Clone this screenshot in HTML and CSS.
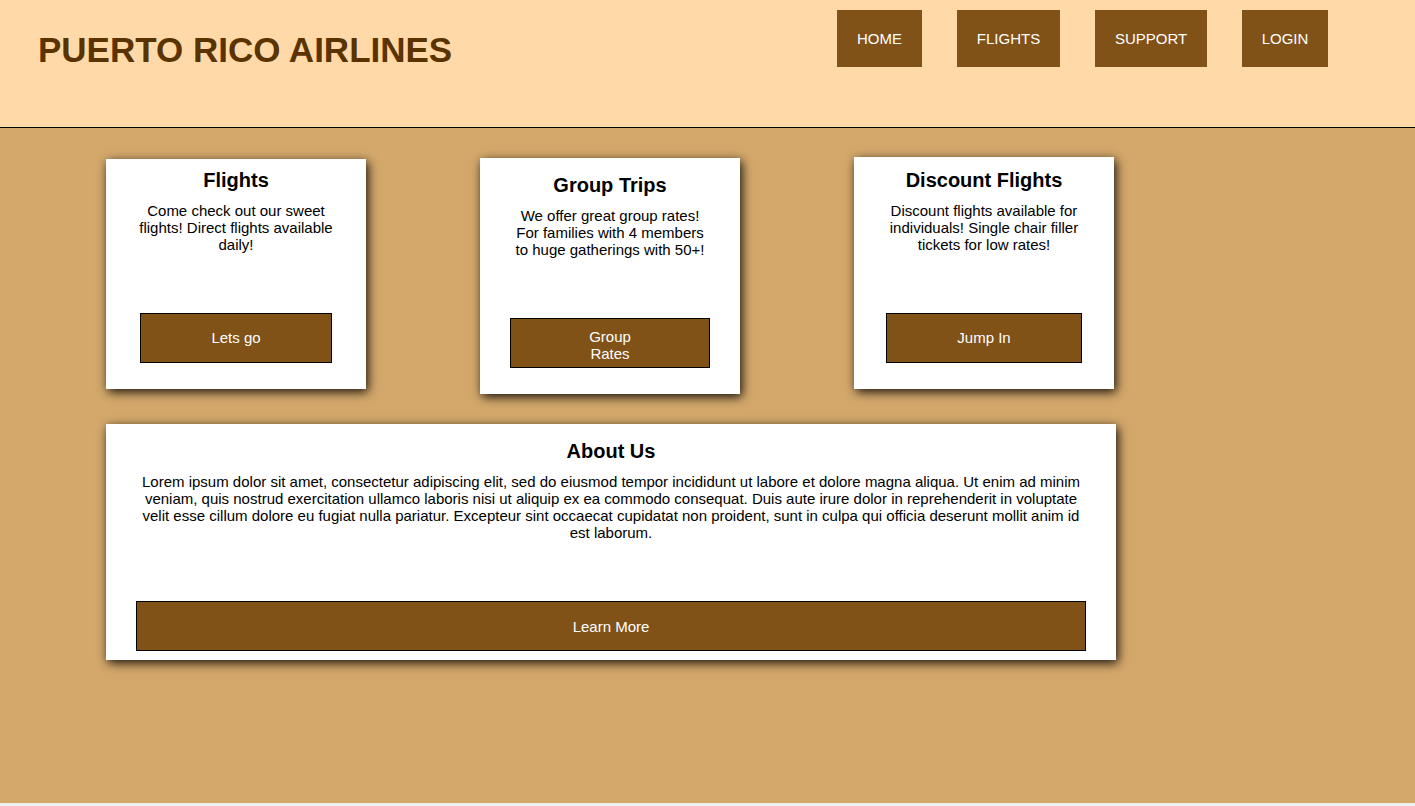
FILE: index.html
```html
<!DOCTYPE html>
<html lang="en">
<head>
<meta charset="utf-8">
<title>Puerto Rico Airlines</title>
<link rel="stylesheet" href="styles.css">
</head>
<body>
<header class="site-header">
  <h1 class="brand">PUERTO RICO AIRLINES</h1>
  <nav class="nav">
    <a class="nav-btn nav-home" href="#">HOME</a>
    <a class="nav-btn nav-flights" href="#">FLIGHTS</a>
    <a class="nav-btn nav-support" href="#">SUPPORT</a>
    <a class="nav-btn nav-login" href="#">LOGIN</a>
  </nav>
</header>
<main class="main">
  <section class="cards">
    <article class="card card-flights">
      <h2 class="card-title">Flights</h2>
      <p class="card-text">Come check out our sweet flights! Direct flights available daily!</p>
      <button class="card-btn btn-flights">Lets go</button>
    </article>
    <article class="card card-group">
      <h2 class="card-title">Group Trips</h2>
      <p class="card-text">We offer great group rates! For families with 4 members to huge gatherings with 50+!</p>
      <button class="card-btn btn-group"><span class="btn-label-narrow">Group Rates</span></button>
    </article>
    <article class="card card-discount">
      <h2 class="card-title">Discount Flights</h2>
      <p class="card-text">Discount flights available for individuals! Single chair filler tickets for low rates!</p>
      <button class="card-btn btn-discount">Jump In</button>
    </article>
  </section>
  <section class="card card-about">
    <h2 class="card-title">About Us</h2>
    <p class="card-text">Lorem ipsum dolor sit amet, consectetur adipiscing elit, sed do eiusmod tempor incididunt ut labore et dolore magna aliqua. Ut enim ad minim veniam, quis nostrud exercitation ullamco laboris nisi ut aliquip ex ea commodo consequat. Duis aute irure dolor in reprehenderit in voluptate velit esse cillum dolore eu fugiat nulla pariatur. Excepteur sint occaecat cupidatat non proident, sunt in culpa qui officia deserunt mollit anim id est laborum.</p>
    <button class="card-btn btn-about">Learn More</button>
  </section>
</main>
</body>
</html>
```
FILE: styles.css
```css
* { box-sizing: border-box; }

html, body {
  margin: 0;
  padding: 0;
}

body {
  background: #f0f0f0;
  font-family: "Liberation Sans", Arial, sans-serif;
  color: #000;
  height: 806px;
  overflow: hidden;
}

.site-header {
  height: 128px;
  background: #ffdaa8;
  border-bottom: 1px solid #000;
  display: flex;
  align-items: flex-start;
  justify-content: space-between;
}

.brand {
  margin: 30px 0 0 38px;
  font-size: 35px;
  line-height: 40px;
  font-weight: bold;
  color: #5a3300;
}

.nav {
  display: flex;
  gap: 35px;
  margin: 10px 87px 0 0;
}

.nav-btn {
  display: flex;
  align-items: center;
  justify-content: center;
  height: 57px;
  padding: 0;
  background: #805218;
  color: #fff;
  text-decoration: none;
  font-size: 15px;
}

.nav-home { width: 85px; }
.nav-flights { width: 103px; }
.nav-support { width: 112px; }
.nav-login { width: 86px; }

.main {
  height: 675px;
  background: #d4a86b;
  padding: 29px 0 0 106px;
}

.cards {
  display: flex;
  align-items: flex-start;
  gap: 114px;
  margin-bottom: 30px;
}

.card {
  background: #fff;
  box-shadow: 2px 3px 10px rgba(0, 0, 0, 0.9);
  text-align: center;
  display: flex;
  flex-direction: column;
  align-items: center;
}

.cards .card {
  width: 260px;
  padding: 10px 30px 26px;
}

.card-flights { margin-top: 2px; }
.card-group { margin-top: 1px; padding-top: 16px !important; }
.card-discount { padding-top: 12px !important; }

.card-title {
  margin: 0;
  font-size: 20px;
  line-height: 23px;
  font-weight: bold;
}

.card-text {
  margin: 10px 0 0;
  font-size: 15px;
  line-height: 17px;
  width: 100%;
}

.card-btn {
  margin-top: 60px;
  height: 50px;
  background: #805218;
  color: #fff;
  border: 1px solid #000;
  font-family: "Liberation Sans", Arial, sans-serif;
  font-size: 15px;
  line-height: 17px;
  padding: 0 0 2px;
  cursor: pointer;
}

.btn-flights { width: 192px; }
.btn-group { width: 200px; padding: 4px 0 0; }
.btn-discount { width: 196px; }

.btn-label-narrow {
  display: inline-block;
  width: 60px;
}

.card-about {
  width: 1010px;
  padding: 16px 30px 9px;
}

.btn-about {
  width: 100%;
  padding: 0;
}
```
